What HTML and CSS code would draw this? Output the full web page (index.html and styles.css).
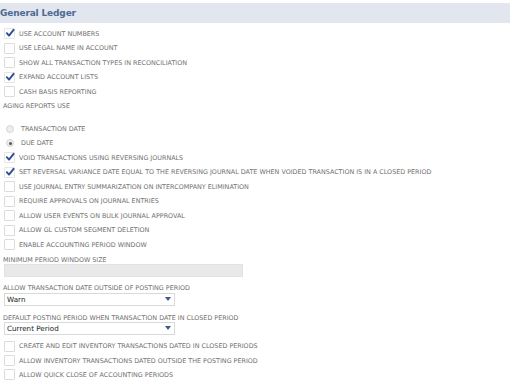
FILE: index.html
```html
<!DOCTYPE html>
<html>
<head>
<meta charset="utf-8">
<link rel="stylesheet" href="styles.css">
</head>
<body>
<div class="page">
  <div class="header">General Ledger</div>
  <div class="group top">
    <div class="row"><span class="cb on"><svg viewBox="0 0 10 10"><path d="M1.8 5.2 L4 7.6 L8.6 1.8"/></svg></span><span class="lbl">USE ACCOUNT NUMBERS</span></div>
    <div class="row"><span class="cb"></span><span class="lbl">USE LEGAL NAME IN ACCOUNT</span></div>
    <div class="row"><span class="cb"></span><span class="lbl">SHOW ALL TRANSACTION TYPES IN RECONCILIATION</span></div>
    <div class="row"><span class="cb on"><svg viewBox="0 0 10 10"><path d="M1.8 5.2 L4 7.6 L8.6 1.8"/></svg></span><span class="lbl">EXPAND ACCOUNT LISTS</span></div>
    <div class="row"><span class="cb"></span><span class="lbl">CASH BASIS REPORTING</span></div>
    <div class="row"><span class="lbl plain">AGING REPORTS USE</span></div>
  </div>
  <div class="group mid">
    <div class="row"><span class="rd"></span><span class="lbl">TRANSACTION DATE</span></div>
    <div class="row"><span class="rd on"></span><span class="lbl">DUE DATE</span></div>
    <div class="row"><span class="cb on"><svg viewBox="0 0 10 10"><path d="M1.8 5.2 L4 7.6 L8.6 1.8"/></svg></span><span class="lbl">VOID TRANSACTIONS USING REVERSING JOURNALS</span></div>
    <div class="row"><span class="cb on"><svg viewBox="0 0 10 10"><path d="M1.8 5.2 L4 7.6 L8.6 1.8"/></svg></span><span class="lbl">SET REVERSAL VARIANCE DATE EQUAL TO THE REVERSING JOURNAL DATE WHEN VOIDED TRANSACTION IS IN A CLOSED PERIOD</span></div>
    <div class="row"><span class="cb"></span><span class="lbl">USE JOURNAL ENTRY SUMMARIZATION ON INTERCOMPANY ELIMINATION</span></div>
    <div class="row"><span class="cb"></span><span class="lbl">REQUIRE APPROVALS ON JOURNAL ENTRIES</span></div>
    <div class="row"><span class="cb"></span><span class="lbl">ALLOW USER EVENTS ON BULK JOURNAL APPROVAL</span></div>
    <div class="row"><span class="cb"></span><span class="lbl">ALLOW GL CUSTOM SEGMENT DELETION</span></div>
    <div class="row"><span class="cb"></span><span class="lbl">ENABLE ACCOUNTING PERIOD WINDOW</span></div>
  </div>
  <div class="field f1">
    <div class="flabel">MINIMUM PERIOD WINDOW SIZE</div>
    <div class="input"></div>
  </div>
  <div class="field f2">
    <div class="flabel">ALLOW TRANSACTION DATE OUTSIDE OF POSTING PERIOD</div>
    <div class="select"><span>Warn</span><span class="arrow"></span></div>
  </div>
  <div class="field f3">
    <div class="flabel">DEFAULT POSTING PERIOD WHEN TRANSACTION DATE IN CLOSED PERIOD</div>
    <div class="select"><span>Current Period</span><span class="arrow"></span></div>
  </div>
  <div class="group bottom">
    <div class="row"><span class="cb"></span><span class="lbl">CREATE AND EDIT INVENTORY TRANSACTIONS DATED IN CLOSED PERIODS</span></div>
    <div class="row"><span class="cb"></span><span class="lbl">ALLOW INVENTORY TRANSACTIONS DATED OUTSIDE THE POSTING PERIOD</span></div>
    <div class="row"><span class="cb"></span><span class="lbl">ALLOW QUICK CLOSE OF ACCOUNTING PERIODS</span></div>
  </div>
</div>
</body>
</html>
```
FILE: styles.css
```css
html, body {
  margin: 0;
  padding: 0;
  background: #ffffff;
}
body {
  font-family: "DejaVu Sans", Verdana, sans-serif;
  width: 510px;
  height: 382px;
  overflow: hidden;
}
.page {
  display: flex;
  flex-direction: column;
}
.header {
  margin-top: 3px;
  height: 20px;
  background: #e1e6ef;
  color: #4c6a92;
  font-weight: bold;
  font-size: 9px;
  line-height: 20px;
  letter-spacing: -0.15px;
}
.group {
  display: flex;
  flex-direction: column;
}
.group.top {
  margin-top: 3.8px;
}
.group.mid {
  margin-top: 8.6px;
}
.row {
  height: 14.5px;
  display: flex;
  align-items: center;
}
.group.top .row {
  height: 14.4px;
}
.group.bottom {
  margin-top: 4.6px;
}
.group.bottom .row {
  height: 14.2px;
}
.lbl {
  font-size: 6.4px;
  color: #707070;
  white-space: nowrap;
  margin-left: 4px;
}
.lbl.plain {
  margin-left: 3px;
}
.cb {
  width: 9px;
  height: 9px;
  margin-left: 4px;
  border: 1px solid #dcdcdc;
  border-radius: 1px;
  background: #ffffff;
  position: relative;
  flex: none;
}
.cb.on {
  border-color: #e6e6e6;
}
.cb svg {
  position: absolute;
  left: 0;
  top: -1px;
  width: 10px;
  height: 10px;
}
.cb svg path {
  fill: none;
  stroke: #2d4f93;
  stroke-width: 1.9;
  stroke-linecap: round;
  stroke-linejoin: round;
}
.rd {
  width: 6px;
  height: 6px;
  margin-left: 6px;
  margin-right: 3px;
  border: 1px solid #d6d6d6;
  border-radius: 50%;
  background: #eeeeee;
  position: relative;
  flex: none;
}
.rd.on::after {
  content: "";
  position: absolute;
  left: 1.5px;
  top: 1.5px;
  width: 3px;
  height: 3px;
  border-radius: 50%;
  background: #555555;
}
.field {
  display: flex;
  flex-direction: column;
}
.field.f1 {
  margin-top: 4.9px;
}
.field.f2 {
  margin-top: 8.3px;
}
.field.f3 {
  margin-top: 9.1px;
}
.flabel {
  font-size: 6.4px;
  color: #707070;
  margin-left: 3px;
  height: 7px;
  line-height: 7px;
  white-space: nowrap;
}
.input {
  width: 237px;
  height: 11px;
  margin-left: 4px;
  background: #e9e9e9;
  border: 1px solid #e2e2e2;
}
.select {
  width: 167px;
  height: 10.4px;
  margin-left: 4px;
  margin-top: 0.7px;
  border: 1px solid #d9d9d9;
  background: #ffffff;
  display: flex;
  align-items: center;
  justify-content: space-between;
  padding-left: 2px;
  font-size: 7.2px;
  color: #222222;
}
.arrow {
  width: 0;
  height: 0;
  border-left: 3.5px solid transparent;
  border-right: 3.5px solid transparent;
  border-top: 4px solid #3e5c85;
  margin-right: 3px;
}
```
